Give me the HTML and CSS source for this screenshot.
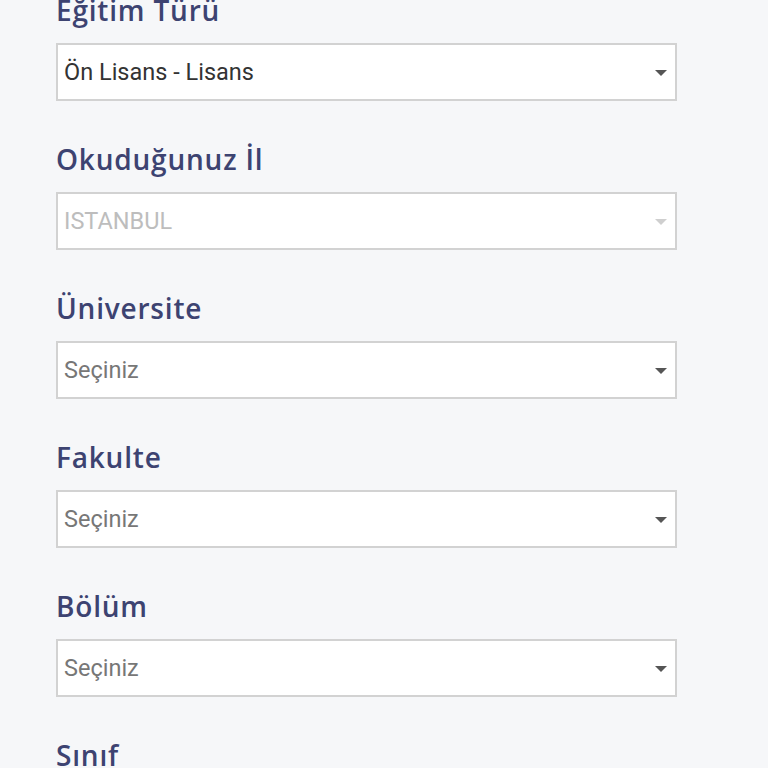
FILE: index.html
```html
<!DOCTYPE html>
<html>
<head>
    <title>Eğitim Bilgileri</title>
    <link rel="stylesheet" href="styles.css">
</head>
<body>
    <div class="form">
        <div class="group">
            <label>Eğitim Türü</label>
            <div class="select">
                <span class="value">Ön Lisans - Lisans</span>
                <span class="arrow"></span>
            </div>
        </div>
        <div class="group">
            <label>Okuduğunuz İl</label>
            <div class="select disabled">
                <span class="value">ISTANBUL</span>
                <span class="arrow"></span>
            </div>
        </div>
        <div class="group">
            <label>Üniversite</label>
            <div class="select">
                <span class="value placeholder">Seçiniz</span>
                <span class="arrow"></span>
            </div>
        </div>
        <div class="group">
            <label>Fakulte</label>
            <div class="select">
                <span class="value placeholder">Seçiniz</span>
                <span class="arrow"></span>
            </div>
        </div>
        <div class="group">
            <label>Bölüm</label>
            <div class="select">
                <span class="value placeholder">Seçiniz</span>
                <span class="arrow"></span>
            </div>
        </div>
        <div class="group">
            <label>Sınıf</label>
        </div>
    </div>
</body>
</html>
```

FILE: styles.css
```css
body {
    margin: 0;
    background-color: #f6f7f9;
    font-family: Roboto, "Liberation Sans", sans-serif;
    overflow: hidden;
}

.form {
    width: 621px;
    margin-left: 56px;
    margin-top: -8px;
}

.group {
    margin-bottom: 40px;
}

label {
    display: block;
    font-family: "Open Sans", "DejaVu Sans", sans-serif;
    font-weight: 600;
    font-size: 28px;
    line-height: 36px;
    letter-spacing: 0.8px;
    color: #3d4371;
    margin-bottom: 15px;
}

.select {
    height: 58px;
    box-sizing: border-box;
    border: 2px solid #d2d2d2;
    background-color: #fff;
    display: flex;
    align-items: center;
    justify-content: space-between;
    padding: 0 8px 0 6px;
}

.value {
    font-size: 23.5px;
    color: #333;
}

.value.placeholder {
    color: #777;
}

.disabled .value {
    color: #bdbdbd;
}

.arrow {
    width: 0;
    height: 0;
    border-left: 6px solid transparent;
    border-right: 6px solid transparent;
    border-top: 6px solid #555;
    margin-top: 2px;
}

.disabled .arrow {
    border-top-color: #cfcfcf;
}
```
